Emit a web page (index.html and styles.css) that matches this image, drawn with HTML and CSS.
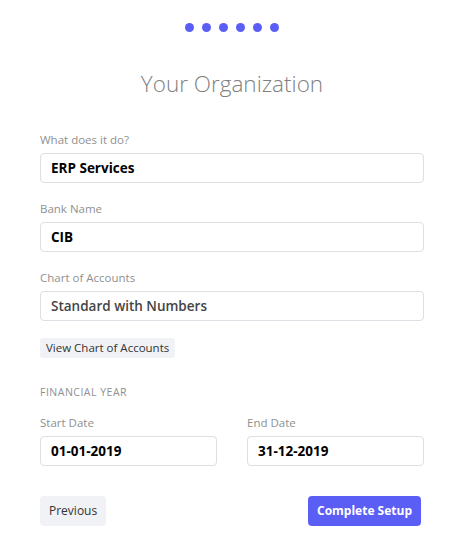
FILE: index.html
```html
<!DOCTYPE html>
<html>
<head>
<meta charset="utf-8">
<link rel="stylesheet" href="styles.css">
</head>
<body>
<div class="page">
  <div class="dots">
    <span class="dot"></span><span class="dot"></span><span class="dot"></span><span class="dot"></span><span class="dot"></span><span class="dot"></span>
  </div>
  <h1 class="title">Your Organization</h1>
  <div class="form">
    <div class="field">
      <label class="label">What does it do?</label>
      <div class="input">ERP Services</div>
    </div>
    <div class="field">
      <label class="label">Bank Name</label>
      <div class="input">CIB</div>
    </div>
    <div class="field">
      <label class="label">Chart of Accounts</label>
      <div class="input input-muted">Standard with Numbers</div>
    </div>
    <div class="link-row"><span class="btn-small">View Chart of Accounts</span></div>
    <div class="section">FINANCIAL YEAR</div>
    <div class="row">
      <div class="field">
        <label class="label">Start Date</label>
        <div class="input">01-01-2019</div>
      </div>
      <div class="field">
        <label class="label">End Date</label>
        <div class="input">31-12-2019</div>
      </div>
    </div>
    <div class="actions">
      <span class="btn btn-secondary">Previous</span>
      <span class="btn btn-primary">Complete Setup</span>
    </div>
  </div>
</div>
</body>
</html>
```
FILE: styles.css
```css
* { box-sizing: border-box; }
html, body { margin: 0; padding: 0; background: #fff; }
body { font-family: "Open Sans", "Noto Sans", sans-serif; color: #222; }
.page { width: 458px; height: 540px; padding: 23px 34px 0 40px; }
.dots { display: flex; justify-content: center; gap: 8px; height: 10px; }
.dot { width: 9px; height: 9px; border-radius: 50%; background: #5b5ef4; }
.title { margin: 35px 0 0; font-weight: 300; font-size: 22.5px; line-height: 32px; text-align: center; color: #808080; letter-spacing: 0; }
.form { margin-top: 32px; display: flex; flex-direction: column; }
.field { display: flex; flex-direction: column; }
.form > .field { margin-bottom: 18px; }
.label { font-size: 11.5px; line-height: 16px; color: #909090; margin-bottom: 5px; }
.input { height: 30px; border: 1px solid #dcdfe3; border-radius: 4px; padding: 0 10px; font-size: 13.5px; font-weight: 700; line-height: 28px; color: #000; }
.input-muted { color: #444; font-weight: 600; }
.link-row { margin-top: -1px; display: flex; }
.btn-small { background: #f0f2f5; border-radius: 3px; font-size: 11.5px; line-height: 20px; padding: 0 6px; color: #333; }
.section { margin-top: 26px; font-size: 10.5px; line-height: 16px; color: #909090; letter-spacing: 0.5px; }
.row { margin-top: 15px; display: grid; grid-template-columns: 1fr 1fr; gap: 30px; }
.actions { margin-top: 30px; display: flex; justify-content: space-between; padding-right: 3px; }
.btn { height: 30px; border-radius: 4px; font-size: 12px; line-height: 30px; padding: 0 9px; }
.btn-secondary { background: #f0f2f5; color: #333; }
.btn-primary { background: #5b5ef4; color: #fff; font-weight: 700; }
```
